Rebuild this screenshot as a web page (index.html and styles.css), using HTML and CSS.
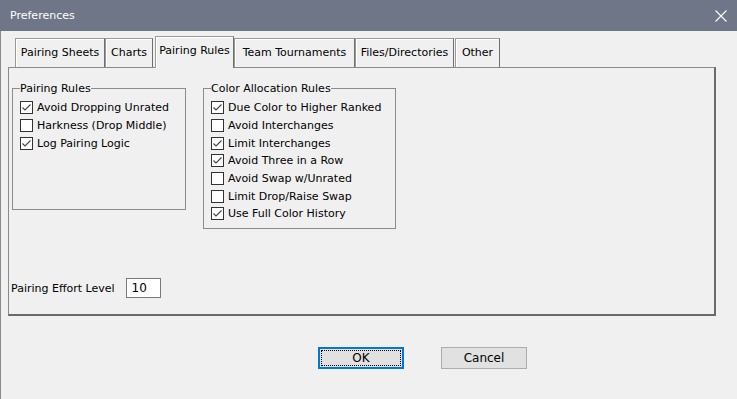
FILE: index.html
```html
<!DOCTYPE html>
<html lang="en">
<head>
    <meta charset="utf-8">
    <title>Preferences</title>
    <link rel="stylesheet" href="styles.css">
</head>
<body>
<div class="window">
    <div class="titlebar">
        <span class="title">Preferences</span>
        <svg class="close" width="12" height="12" viewBox="0 0 12 12">
            <path d="M0.5 0.5 L11.5 11.5 M11.5 0.5 L0.5 11.5" stroke="#fff" stroke-width="1.1" fill="none"/>
        </svg>
    </div>
    <div class="client">
        <div class="tabs">
            <div class="tab sheets">Pairing Sheets</div>
            <div class="tab charts">Charts</div>
            <div class="tab rules active">Pairing Rules</div>
            <div class="tab team">Team Tournaments</div>
            <div class="tab files">Files/Directories</div>
            <div class="tab other">Other</div>
        </div>
        <div class="panel">
            <div class="groups">
                <fieldset class="group pairing">
                    <legend>Pairing Rules</legend>
                    <div class="check on"><span class="box"></span>Avoid Dropping Unrated</div>
                    <div class="check"><span class="box"></span>Harkness (Drop Middle)</div>
                    <div class="check on"><span class="box"></span>Log Pairing Logic</div>
                </fieldset>
                <fieldset class="group color">
                    <legend>Color Allocation Rules</legend>
                    <div class="check on"><span class="box"></span>Due Color to Higher Ranked</div>
                    <div class="check"><span class="box"></span>Avoid Interchanges</div>
                    <div class="check on"><span class="box"></span>Limit Interchanges</div>
                    <div class="check on"><span class="box"></span>Avoid Three in a Row</div>
                    <div class="check"><span class="box"></span>Avoid Swap w/Unrated</div>
                    <div class="check"><span class="box"></span>Limit Drop/Raise Swap</div>
                    <div class="check on"><span class="box"></span>Use Full Color History</div>
                </fieldset>
            </div>
            <div class="effort">
                <label for="effort">Pairing Effort Level</label>
                <input id="effort" type="text" value="10">
            </div>
        </div>
        <div class="buttons">
            <button class="btn default"><span>OK</span></button>
            <button class="btn">Cancel</button>
        </div>
    </div>
</div>
</body>
</html>
```

FILE: styles.css
```css
body {
    margin: 0;
    background-color: #f0f0f0;
    font-family: "DejaVu Sans", Verdana, sans-serif;
    font-size: 11px;
    color: #000;
}

.window {
    width: 737px;
    height: 399px;
    display: flex;
    flex-direction: column;
}

.titlebar {
    height: 31px;
    background-color: #6e7688;
    display: flex;
    align-items: center;
    justify-content: space-between;
    padding: 0 10px 0 10px;
    box-sizing: border-box;
}

.title {
    color: #fff;
    font-size: 11px;
}

.close {
    margin-top: 1px;
}

.client {
    flex: 1;
    border-left: 1px solid #8a8a8a;
    padding-left: 7px;
}

.tabs {
    display: flex;
    align-items: flex-end;
    height: 36px;
    padding-left: 7px;
    position: relative;
    z-index: 1;
}

.tab {
    height: 29px;
    box-sizing: border-box;
    padding: 0 0 1px 0;
    display: flex;
    align-items: center;
    justify-content: center;
    border: 1px solid #9a9a9a;
    border-bottom: none;
    border-right-color: #6f6f6f;
    box-shadow: inset 1px 1px 0 #fff;
    white-space: nowrap;
}

.sheets { width: 90px; }
.charts { width: 48px; }
.rules { width: 79px; }
.team { width: 121px; }
.files { width: 99px; }
.other { width: 45px; margin-left: 1px; }

.tab.active {
    height: 32px;
    margin: 0 0 -1px 2px;
    padding-bottom: 4px;
    background-color: #f0f0f0;
}

.panel {
    width: 708px;
    height: 249px;
    box-sizing: border-box;
    border: 1px solid #8a8a8a;
    border-right: 2px solid #6a6a6a;
    border-bottom: 2px solid #6a6a6a;
    padding: 13px 3px 0 3px;
    display: flex;
    flex-direction: column;
}

.groups {
    display: flex;
    align-items: flex-start;
    gap: 17px;
}

.group {
    margin: 0;
    padding: 0 7px 0 7px;
    border: 1px solid #8c8c8c;
    box-sizing: border-box;
}

.group legend {
    padding: 0;
    height: 15px;
    line-height: 15px;
    margin-left: 0;
}

.pairing {
    width: 174px;
    height: 129px;
}

.color {
    width: 193px;
    height: 148px;
}

.check {
    height: 17.67px;
    display: flex;
    align-items: center;
    gap: 4px;
    white-space: nowrap;
}

.group .check:first-of-type {
    margin-top: 3px;
}

.box {
    width: 13px;
    height: 13px;
    box-sizing: border-box;
    border: 1px solid #333;
    background-color: #fff;
    flex: none;
}

.check.on .box {
    background-image: url("data:image/svg+xml,%3Csvg xmlns='http://www.w3.org/2000/svg' width='11' height='11'%3E%3Cpath d='M1.5 5.5 L4 8 L9.5 2.5' stroke='%23444' stroke-width='1.1' fill='none'/%3E%3C/svg%3E");
    background-repeat: no-repeat;
}

.effort {
    margin-top: 49px;
    margin-left: -1px;
    display: flex;
    align-items: center;
    gap: 11px;
}

.effort input {
    width: 35px;
    height: 20px;
    box-sizing: border-box;
    border: 1px solid #7a7a7a;
    padding: 0 0 0 5px;
    font: inherit;
    font-size: 12px;
    outline: none;
    background: #fff;
}

.buttons {
    display: flex;
    gap: 37px;
    margin: 31px 0 0 310px;
}

.btn {
    width: 86px;
    height: 22px;
    box-sizing: border-box;
    border: 1px solid #adadad;
    background-color: #e1e1e1;
    font: inherit;
    font-size: 12px;
    padding: 0;
    color: #000;
}

.btn.default {
    border: 2px solid #0078d7;
    padding: 1px;
}

.btn.default span {
    display: flex;
    align-items: center;
    justify-content: center;
    height: 100%;
    border: 1px dotted #000;
    box-sizing: border-box;
}
```
